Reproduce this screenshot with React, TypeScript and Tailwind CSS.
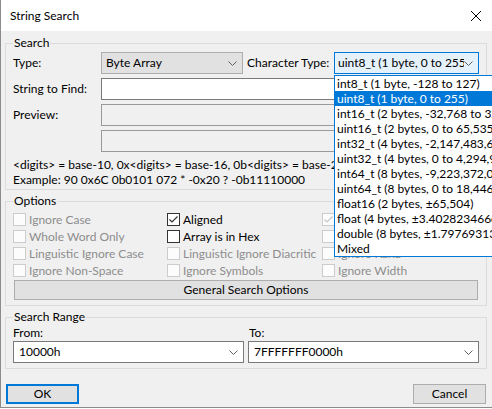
import React from 'react';

const typeItems = [
  'int8_t (1 byte, -128 to 127)',
  'uint8_t (1 byte, 0 to 255)',
  'int16_t (2 bytes, -32,768 to 32,767)',
  'uint16_t (2 bytes, 0 to 65,535)',
  'int32_t (4 bytes, -2,147,483,648 to 2,147,483,647)',
  'uint32_t (4 bytes, 0 to 4,294,967,295)',
  'int64_t (8 bytes, -9,223,372,036,854,775,808 to 9,223,372,036,854,775,807)',
  'uint64_t (8 bytes, 0 to 18,446,744,073,709,551,615)',
  'float16 (2 bytes, ±65,504)',
  'float (4 bytes, ±3.402823466e+38)',
  'double (8 bytes, ±1.7976931348623158e+308)',
  'Mixed',
];

function Chevron() {
  return (
    <svg width="9" height="5" viewBox="0 0 9 5" className="shrink-0">
      <path d="M0.5 0.5 L4.5 4.5 L8.5 0.5" fill="none" stroke="#606060" strokeWidth="1" />
    </svg>
  );
}

function Check({ label, checked, disabled }: { label: string; checked?: boolean; disabled?: boolean }) {
  return (
    <div className="flex items-center h-[17px] whitespace-nowrap">
      <span
        className={`w-[13px] h-[13px] border flex items-center justify-center shrink-0 ${
          disabled ? 'border-[#cccccc] bg-[#fcfcfc]' : 'border-[#333333] bg-white'
        }`}
      >
        {checked && (
          <svg width="11" height="11" viewBox="0 0 11 11">
            <path
              d="M1.5 5.5 L4 8 L9.5 2.5"
              fill="none"
              stroke={disabled ? '#c5c5c5' : '#333333'}
              strokeWidth="1.2"
            />
          </svg>
        )}
      </span>
      <span className={`ml-[3px] ${disabled ? 'text-[#8d8d8d]' : 'text-black'}`}>{label}</span>
    </div>
  );
}

export default function App() {
  return (
    <div className="relative w-[492px] h-[409px] bg-white overflow-hidden font-['Lato',sans-serif] text-[12px] text-black">
      <div className="h-[408px] flex flex-col bg-[#f0f0f0] border-l border-b border-[#8c8c8c]">
        {/* Title bar */}
        <div className="h-[31px] bg-white flex items-center justify-between pl-[9px] pr-[11px] shrink-0">
          <span>String Search</span>
          <svg width="10" height="10" viewBox="0 0 10 10">
            <path d="M0 0 L10 10 M10 0 L0 10" stroke="#000" strokeWidth="1" />
          </svg>
        </div>

        <div className="pl-[4px] pr-[5px] flex flex-col">
          {/* Search */}
          <fieldset className="mt-[4px] border border-[#dcdcdc] pl-[7px] pr-[6px] pb-[2px] pt-0">
            <legend className="px-px leading-[16px]">Search</legend>
            <div className="mt-px h-[22px] flex items-center">
              <span className="w-[88px] shrink-0">Type:</span>
              <div className="w-[142px] h-[22px] border border-[#adadad] bg-[#e1e1e1] flex items-center justify-between pl-[4px] pr-[5px]">
                <span>Byte Array</span>
                <Chevron />
              </div>
              <span className="ml-[4px] w-[87px] shrink-0 whitespace-nowrap">Character Type:</span>
              <div className="w-[145px] h-[22px] border border-[#0078d7] bg-[#e5f1fb] flex items-center justify-between pl-[3px] pr-[5px] overflow-hidden">
                <span className="whitespace-nowrap overflow-hidden">uint8_t (1 byte, 0 to 255)</span>
                <Chevron />
              </div>
            </div>
            <div className="mt-[4px] flex items-center">
              <span className="w-[88px] shrink-0">String to Find:</span>
              <div className="flex-1 h-[22px] border border-[#7a7a7a] bg-white" />
            </div>
            <div className="mt-[4px] flex items-center">
              <span className="w-[88px] shrink-0">Preview:</span>
              <div className="flex-1 h-[22px] border border-[#9a9a9a] bg-[#f0f0f0]" />
            </div>
            <div className="mt-[4px] flex items-center">
              <div className="ml-[88px] flex-1 h-[22px] border border-[#9a9a9a] bg-[#f0f0f0]" />
            </div>
            <div className="mt-[5px] leading-[15px] whitespace-nowrap">
              <div>&lt;digits&gt; = base-10, 0x&lt;digits&gt; = base-16, 0b&lt;digits&gt; = base-2, 0&lt;digits&gt; = base-8</div>
              <div>Example: 90 0x6C 0b0101 072 * -0x20 ? -0b11110000</div>
            </div>
          </fieldset>

          {/* Options */}
          <fieldset className="mt-[3px] border border-[#dcdcdc] pl-[7px] pr-[7px] pb-[5px] pt-0">
            <legend className="px-px leading-[16px]">Options</legend>
            <div className="mt-[2px] grid grid-cols-[154px_155px_1fr]">
              <Check label="Ignore Case" disabled />
              <Check label="Aligned" checked />
              <Check label="Match Width" checked disabled />
              <Check label="Whole Word Only" disabled />
              <Check label="Array is in Hex" />
              <Check label="Ignore Case Kana" disabled />
              <Check label="Linguistic Ignore Case" disabled />
              <Check label="Linguistic Ignore Diacritic" disabled />
              <Check label="Ignore Kana" disabled />
              <Check label="Ignore Non-Space" disabled />
              <Check label="Ignore Symbols" disabled />
              <Check label="Ignore Width" disabled />
            </div>
            <button className="mt-px ml-px w-[464px] h-[20px] border border-[#adadad] bg-[#e1e1e1] flex items-center justify-center">
              General Search Options
            </button>
          </fieldset>

          {/* Search Range */}
          <fieldset className="mt-[3px] border border-[#dcdcdc] pl-[7px] pr-[7px] pb-[5px] pt-0">
            <legend className="px-px leading-[16px]">Search Range</legend>
            <div className="grid grid-cols-2 gap-x-[4px]">
              <span className="leading-[16px]">From:</span>
              <span className="leading-[16px] pl-px">To:</span>
              <div className="h-[22px] border border-[#7a7a7a] bg-white flex items-center justify-between pl-[5px] pr-[5px]">
                <span>10000h</span>
                <Chevron />
              </div>
              <div className="h-[22px] border border-[#7a7a7a] bg-white flex items-center justify-between pl-[5px] pr-[5px]">
                <span>7FFFFFFF0000h</span>
                <Chevron />
              </div>
            </div>
          </fieldset>

          <div className="mt-[15px] flex justify-between">
            <button className="ml-px w-[73px] h-[20px] border-2 border-[#0078d7] bg-[#e1e1e1] flex items-center justify-center">
              OK
            </button>
            <button className="mr-px w-[73px] h-[20px] border border-[#adadad] bg-[#e1e1e1] flex items-center justify-center">
              Cancel
            </button>
          </div>
        </div>
      </div>

      {/* Open drop-down list of the Character Type combo */}
      <div className="absolute left-[334px] top-[75px] w-[175px] border border-[#0078d7] bg-white overflow-hidden">
        {typeItems.map((item, i) => (
          <div
            key={item}
            className={`h-[15px] leading-[15px] pl-[2px] whitespace-nowrap ${
              i === 1 ? 'bg-[#0078d7] text-white' : 'text-black'
            }`}
          >
            {item}
          </div>
        ))}
      </div>
    </div>
  );
}
